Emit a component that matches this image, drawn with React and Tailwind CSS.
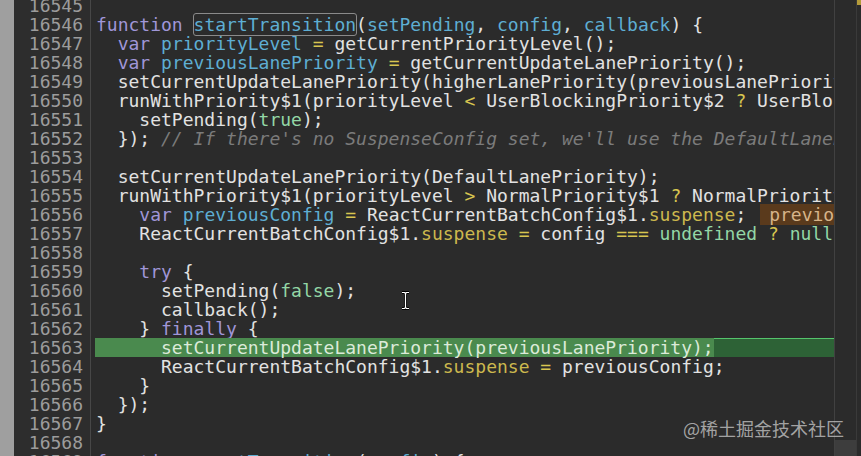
import React from "react";

const K = ({ children }) => <span className="text-[#a096d8]">{children}</span>;
const D = ({ children }) => <span className="text-[#5eaed3]">{children}</span>;
const O = ({ children }) => <span className="text-[#d8c550]">{children}</span>;
const P = ({ children }) => <span className="text-[#cdb94e]">{children}</span>;
const G = ({ children }) => <span className="text-[#93d7a6]">{children}</span>;
const C = ({ children }) => <span className="text-[#7b7b7b] italic">{children}</span>;

const lines = [
  [16545, ""],
  [
    16546,
    <>
      <K>function</K>{" "}
      <span className="outline outline-1 outline-[#8a8a8a] rounded-[2px]">
        <D>startTransition</D>
      </span>
      (<D>setPending</D>, <D>config</D>, <D>callback</D>) {"{"}
    </>,
  ],
  [
    16547,
    <>
      {"  "}
      <K>var</K> <D>priorityLevel</D> <O>=</O> getCurrentPriorityLevel();
    </>,
  ],
  [
    16548,
    <>
      {"  "}
      <K>var</K> <D>previousLanePriority</D> <O>=</O> getCurrentUpdateLanePriority();
    </>,
  ],
  [16549, "  setCurrentUpdateLanePriority(higherLanePriority(previousLanePriority, InputContinuousLanePriority));"],
  [
    16550,
    <>
      {"  runWithPriority$1(priorityLevel "}
      <O>{"<"}</O>
      {" UserBlockingPriority$2 "}
      <O>?</O>
      {" UserBlockingPriority$2 : priorityLevel, function () {"}
    </>,
  ],
  [
    16551,
    <>
      {"    setPending("}
      <G>true</G>
      {");"}
    </>,
  ],
  [
    16552,
    <>
      {"  }); "}
      <C>// If there's no SuspenseConfig set, we'll use the DefaultLanePriority.</C>
    </>,
  ],
  [16553, ""],
  [16554, "  setCurrentUpdateLanePriority(DefaultLanePriority);"],
  [
    16555,
    <>
      {"  runWithPriority$1(priorityLevel "}
      <O>{">"}</O>
      {" NormalPriority$1 "}
      <O>?</O>
      {" NormalPriority$1 : priorityLevel, function () {"}
    </>,
  ],
  [
    16556,
    <>
      {"    "}
      <K>var</K> <D>previousConfig</D> <O>=</O> ReactCurrentBatchConfig$1.<P>suspense</P>;{" "}
      <span className="ml-[3px] pl-[9px] bg-[#5a3a1c] text-[#d6b48a]">previousConfig</span>
    </>,
  ],
  [
    16557,
    <>
      {"    ReactCurrentBatchConfig$1."}
      <P>suspense</P> <O>=</O> config <O>===</O> <G>undefined</G> <O>?</O> <G>null</G> : config;
    </>,
  ],
  [16558, ""],
  [
    16559,
    <>
      {"    "}
      <K>try</K> {"{"}
    </>,
  ],
  [
    16560,
    <>
      {"      setPending("}
      <G>false</G>
      {");"}
    </>,
  ],
  [16561, "      callback();"],
  [
    16562,
    <>
      {"    } "}
      <K>finally</K> {"{"}
    </>,
  ],
  [16563, "HL"],
  [
    16564,
    <>
      {"      ReactCurrentBatchConfig$1."}
      <P>suspense</P> <O>=</O> previousConfig;
    </>,
  ],
  [16565, "    }"],
  [16566, "  });"],
  [16567, "}"],
  [16568, ""],
  [
    16569,
    <>
      <K>function</K> <D>mountTransition</D>(<D>config</D>) {"{"}
    </>,
  ],
];

export default function App() {
  return (
    <div
      className="relative w-[861px] h-[456px] overflow-hidden flex bg-[#2b2b2b] text-[#e2e2e2]"
      style={{ fontFamily: '"DejaVu Sans Mono", "Liberation Mono", monospace' }}
    >
      {/* left light strip */}
      <div className="w-[14px] shrink-0 bg-[#9f9f9f]" />
      {/* gutter */}
      <div className="w-[76px] shrink-0 bg-[#2d2d2d] pr-[7px] text-right text-[18px] leading-[19px] text-[#9c9c9c] mt-[-4px]">
        {lines.map(([n]) => (
          <div key={n} className="h-[19px] whitespace-pre">
            {n}
          </div>
        ))}
      </div>
      <div className="w-[1px] shrink-0 bg-[#474747]" />
      {/* code */}
      <div className="w-[743px] shrink-0 overflow-hidden pl-[4px] text-[18px] leading-[19px] mt-[-4px]">
        {lines.map(([n, content]) =>
          content === "HL" ? (
            <div
              key={n}
              className="h-[19px] whitespace-pre bg-[#2d6236] shadow-[inset_0_1px_0_#55c46c] pl-0"
            >
              <span className="inline-block h-[19px] bg-[#4a8a4e] text-[#dcead9] pl-[1px]">
                {"      setCurrentUpdateLanePriority(previousLanePriority);"}
              </span>
            </div>
          ) : (
            <div key={n} className="h-[19px] whitespace-pre pl-[1px]">
              {content}
            </div>
          )
        )}
      </div>
      <div className="w-[1px] shrink-0 bg-[#414141]" />
      {/* right strip */}
      <div className="w-[21px] shrink-0 bg-[#2b2b2b] flex flex-col justify-end">
        <div className="h-[16px] bg-[#3d3d3d]" />
      </div>
      <div className="w-[1px] shrink-0 bg-[#3a3a3a]" />
      <div className="flex-1 bg-[#2b2b2b] flex flex-col">
        <div className="h-[5px] bg-[#b49b3a]" />
      </div>

      {/* text cursor */}
      <svg
        className="absolute left-[400px] top-[291px]"
        width="11"
        height="19"
        viewBox="0 0 11 19"
      >
        <path
          d="M2 1.5h2.5l1 1 1-1H9M5.5 2.5v14M2 17.5h2.5l1-1 1 1H9"
          fill="none"
          stroke="#000"
          strokeWidth="3"
        />
        <path
          d="M2 1.5h2.5l1 1 1-1H9M5.5 2.5v14M2 17.5h2.5l1-1 1 1H9"
          fill="none"
          stroke="#fff"
          strokeWidth="1.2"
        />
      </svg>

      {/* watermark */}
      <div
        className="absolute left-[683px] top-[415px] text-[18px] leading-[26px] text-[#c4c4c4]/80 whitespace-nowrap"
        style={{ fontFamily: '"Noto Sans CJK SC", "Noto Sans", sans-serif' }}
      >
        @稀土掘金技术社区
      </div>
    </div>
  );
}
